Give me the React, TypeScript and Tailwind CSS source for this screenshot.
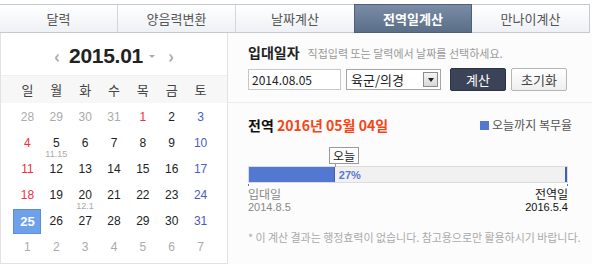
import React from 'react';

const tabs = ['달력', '양음력변환', '날짜계산', '전역일계산', '만나이계산'];

type Day = { d: number; muted?: boolean; sub?: string; today?: boolean; holiday?: boolean };

const weeks: Day[][] = [
  [{ d: 28, muted: true }, { d: 29, muted: true }, { d: 30, muted: true }, { d: 31, muted: true }, { d: 1, holiday: true }, { d: 2 }, { d: 3 }],
  [{ d: 4 }, { d: 5, sub: '11.15' }, { d: 6 }, { d: 7 }, { d: 8 }, { d: 9 }, { d: 10 }],
  [{ d: 11 }, { d: 12 }, { d: 13 }, { d: 14 }, { d: 15 }, { d: 16 }, { d: 17 }],
  [{ d: 18 }, { d: 19 }, { d: 20, sub: '12.1' }, { d: 21 }, { d: 22 }, { d: 23 }, { d: 24 }],
  [{ d: 25, today: true }, { d: 26 }, { d: 27 }, { d: 28 }, { d: 29 }, { d: 30 }, { d: 31 }],
  [{ d: 1, muted: true }, { d: 2, muted: true }, { d: 3, muted: true }, { d: 4, muted: true }, { d: 5, muted: true }, { d: 6, muted: true }, { d: 7, muted: true }],
];

const dayColor = (day: Day, col: number) => {
  if (day.muted) return 'text-[#aaaaaa]';
  if (col === 0 || day.holiday) return 'text-[#f0303c]';
  if (col === 6) return 'text-[#4b5bc0]';
  return 'text-[#222222]';
};

const num = { fontFamily: '"Liberation Sans", Arial, sans-serif' };

const App: React.FC = () => {
  const font = { fontFamily: '"Noto Sans CJK KR", "Noto Sans", sans-serif' };
  return (
    <div className="w-[592px] h-[267px] bg-white overflow-hidden pt-[4px]" style={font}>
      {/* tabs */}
      <div className="flex w-[590px] h-[29px] border-t border-b border-[#c5cad1]">
        {tabs.map((t, i) =>
          i === 3 ? (
            <div
              key={t}
              className="w-[118px] flex items-center justify-center text-[13px] font-bold text-white bg-gradient-to-b from-[#7a8ca5] to-[#5b6e88] border border-[#4e5f77] -mt-px -mb-px"
            >
              {t}
            </div>
          ) : (
            <div
              key={t}
              className={`w-[118px] flex items-center justify-center text-[13px] text-[#555] bg-gradient-to-b from-[#ffffff] to-[#eef1f5] ${i < 4 && i !== 2 ? 'border-r border-[#d3d7dc]' : ''} ${i === 4 ? 'border-r border-[#c5cad1]' : ''}`}
            >
              {t}
            </div>
          )
        )}
      </div>

      <div className="flex h-[231px]">
        {/* calendar */}
        <div className="w-[228px] border-l border-r border-b border-[#e2e2e2] h-[231px] bg-white">
          <div className="flex items-center justify-center h-[42px] pt-[2px]">
            <span className="text-[#aaaaaa] text-[18px] font-bold mr-[9px] leading-none">‹</span>
            <span className="text-[21px] font-bold text-[#222] tracking-[-0.3px] leading-none" style={num}>
              2015.01
            </span>
            <span className="ml-[6px] mt-[3px] w-0 h-0 border-l-[3px] border-r-[3px] border-t-[3px] border-l-transparent border-r-transparent border-t-[#aaaaaa]" />
            <span className="text-[#aaaaaa] text-[18px] font-bold ml-[13px] leading-none">›</span>
          </div>
          <div className="grid grid-cols-7 px-[12px] h-[28px] items-center bg-[#f7f7f7] border-t border-[#efefef] text-[13px] text-[#444]">
            {['일', '월', '화', '수', '목', '금', '토'].map((w) => (
              <div key={w} className="text-center">{w}</div>
            ))}
          </div>
          <div className="px-[12px] pt-[1px]">
            {weeks.map((wk, r) => (
              <div key={r} className="grid grid-cols-7 h-[26px]">
                {wk.map((day, c) => (
                  <div key={c} className="relative flex items-center justify-center">
                    {day.today ? (
                      <div className="w-[28px] h-[25px] bg-[#6fa1ea] border border-[#5b8ed8] flex items-center justify-center text-white font-bold text-[13px] leading-none" style={num}>
                        {day.d}
                      </div>
                    ) : (
                      <span className={`text-[12px] leading-none ${dayColor(day, c)}`} style={num}>
                        {day.d}
                      </span>
                    )}
                    {day.sub && (
                      <span className="absolute left-0 right-0 top-[20px] text-center text-[9px] leading-[8px] text-[#aaaaaa]" style={num}>
                        {day.sub}
                      </span>
                    )}
                  </div>
                ))}
              </div>
            ))}
          </div>
        </div>

        {/* calculator */}
        <div className="flex-1 bg-[#fcfcfc] w-[362px]">
          <div className="px-[20px] h-[70px] border-b border-[#ececec] pt-[9px]">
            <div className="flex items-baseline h-[20px]">
              <span className="text-[14px] font-bold text-[#222]">입대일자</span>
              <span className="ml-[8px] text-[11px] text-[#999]">직접입력 또는 달력에서 날짜를 선택하세요.</span>
            </div>
            <div className="flex items-center mt-[6px] h-[23px]">
              <div className="w-[93px] h-[21px] border border-[#c8c8c8] bg-white text-[12px] text-[#222] flex items-center px-[3px]">
                2014.08.05
              </div>
              <div className="ml-[5px] w-[95px] h-[21px] border border-[#a5a5a5] bg-white flex items-center">
                <span className="flex-1 text-[13px] text-[#222] pl-[4px]">육군/의경</span>
                <span className="w-[15px] h-[15px] mr-[2px] border border-[#8a8a8a] bg-gradient-to-b from-[#f4f4f4] to-[#d8d8d8] flex items-center justify-center">
                  <span className="w-0 h-0 border-l-[3px] border-r-[3px] border-t-[4px] border-l-transparent border-r-transparent border-t-[#222]" />
                </span>
              </div>
              <div className="ml-[9px] w-[56px] h-[23px] bg-[#3a4357] border border-[#2b3344] rounded-[2px] text-white text-[13px] flex items-center justify-center">
                계산
              </div>
              <div className="ml-[5px] w-[56px] h-[23px] bg-gradient-to-b from-white to-[#efefef] border border-[#b5b5b5] rounded-[2px] text-[#444] text-[13px] flex items-center justify-center">
                초기화
              </div>
            </div>
          </div>

          <div className="px-[20px] pt-[12px]">
            <div className="flex items-center justify-between h-[20px]">
              <div className="text-[14px] font-bold">
                <span className="text-[#111]">전역 </span>
                <span className="text-[#f84314]">2016년 05월 04일</span>
              </div>
              <div className="flex items-center text-[12px] text-[#555]">
                <span className="w-[9px] h-[9px] bg-[#5378d2] mr-[3px]" />
                오늘까지 복무율
              </div>
            </div>

            <div className="relative mt-[31px] w-[320px]">
              <div className="absolute left-[81px] -top-[19px] h-[17px] px-[3px] border border-[#999] bg-white text-[12px] leading-[15px] text-[#222]">
                오늘
              </div>
              <div className="absolute left-[87px] -top-[2px] w-px h-[3px] bg-[#999]" />
              <div className="flex h-[17px] border border-[#dcdcdc] bg-[#f1f1f1]">
                <div className="w-[27%] bg-[#5378d2] border-r border-[#3f60b8]" />
                <span className="ml-[4px] text-[11px] font-bold text-[#5a78d0] leading-[16px]" style={num}>27%</span>
                <div className="ml-auto w-[2px] bg-[#3f60b8]" />
              </div>
              <div className="flex justify-between h-[3px]">
                <span className="w-px h-[2px] mt-px bg-[#5378d2]" />
                <span className="w-px h-[2px] mt-px bg-[#5378d2]" />
              </div>
              <div className="flex justify-between mt-[1px]">
                <div className="text-[#888]">
                  <div className="text-[12px] leading-[14px]">입대일</div>
                  <div className="text-[11px] leading-[13px]" style={num}>2014.8.5</div>
                </div>
                <div className="text-right text-[#111]">
                  <div className="text-[12px] leading-[14px]">전역일</div>
                  <div className="text-[11px] leading-[13px]" style={num}>2016.5.4</div>
                </div>
              </div>
            </div>

            <div className="mt-[15px] text-[11px] text-[#aaaaaa] tracking-[-0.05px] whitespace-nowrap">
              * 이 계산 결과는 행정효력이 없습니다. 참고용으로만 활용하시기 바랍니다.
            </div>
          </div>
        </div>
      </div>
    </div>
  );
};

export default App;
